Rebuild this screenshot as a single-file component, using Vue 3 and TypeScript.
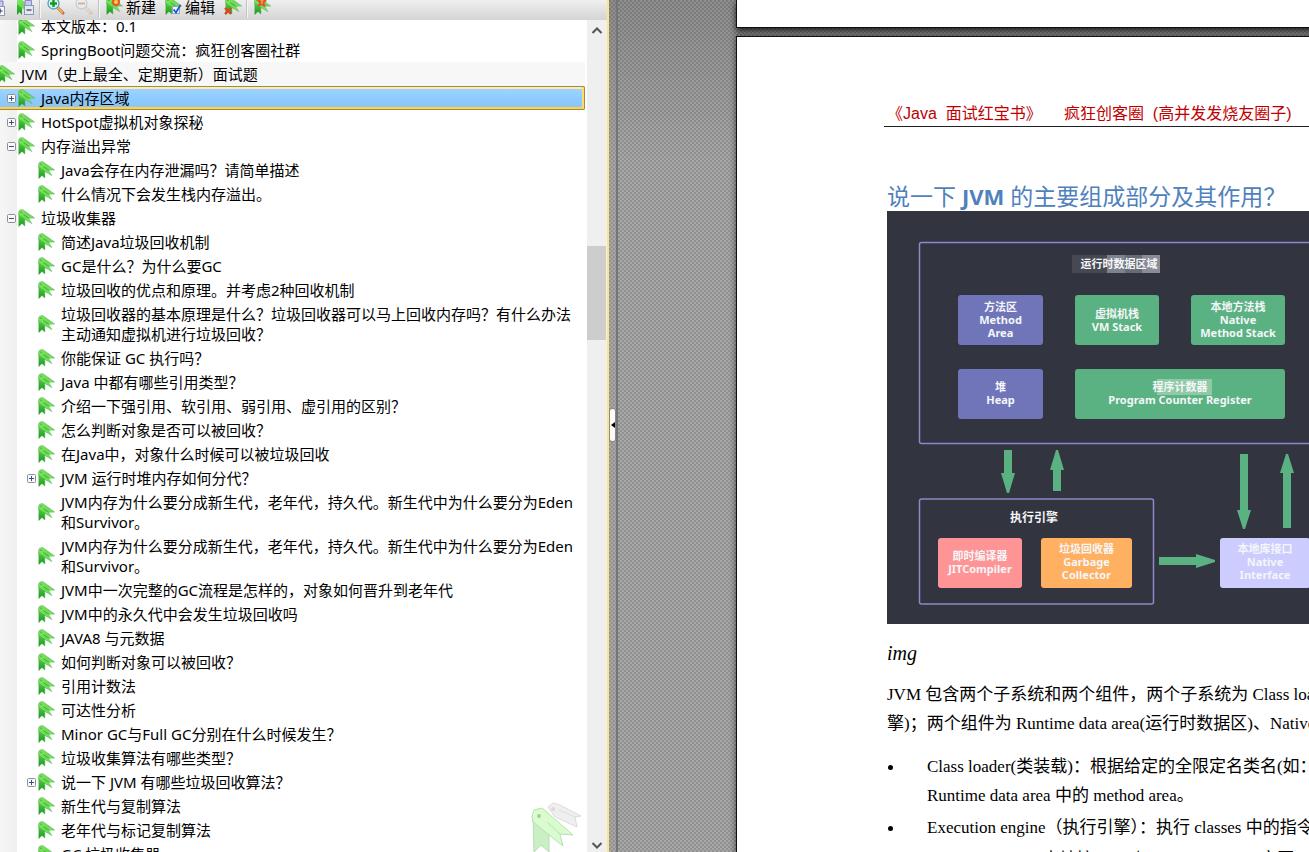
<script setup lang="ts">
import { ref } from 'vue'

interface Row {
  level: number
  text: string
  toggle?: 'plus' | 'minus'
  shaded?: boolean
}

const rows: Row[] = [
  { level: 1, text: '本文版本：0.1' },
  { level: 1, text: 'SpringBoot问题交流：疯狂创客圈社群' },
  { level: 0, text: 'JVM（史上最全、定期更新）面试题', shaded: true },
  { level: 1, text: 'Java内存区域', toggle: 'plus' },
  { level: 1, text: 'HotSpot虚拟机对象探秘', toggle: 'plus' },
  { level: 1, text: '内存溢出异常', toggle: 'minus' },
  { level: 2, text: 'Java会存在内存泄漏吗？请简单描述' },
  { level: 2, text: '什么情况下会发生栈内存溢出。' },
  { level: 1, text: '垃圾收集器', toggle: 'minus' },
  { level: 2, text: '简述Java垃圾回收机制' },
  { level: 2, text: 'GC是什么？为什么要GC' },
  { level: 2, text: '垃圾回收的优点和原理。并考虑2种回收机制' },
  { level: 2, text: '垃圾回收器的基本原理是什么？垃圾回收器可以马上回收内存吗？有什么办法\n主动通知虚拟机进行垃圾回收？' },
  { level: 2, text: '你能保证 GC 执行吗？' },
  { level: 2, text: 'Java 中都有哪些引用类型？' },
  { level: 2, text: '介绍一下强引用、软引用、弱引用、虚引用的区别？' },
  { level: 2, text: '怎么判断对象是否可以被回收？' },
  { level: 2, text: '在Java中，对象什么时候可以被垃圾回收' },
  { level: 2, text: 'JVM 运行时堆内存如何分代？', toggle: 'plus' },
  { level: 2, text: 'JVM内存为什么要分成新生代，老年代，持久代。新生代中为什么要分为Eden\n和Survivor。' },
  { level: 2, text: 'JVM内存为什么要分成新生代，老年代，持久代。新生代中为什么要分为Eden\n和Survivor。' },
  { level: 2, text: 'JVM中一次完整的GC流程是怎样的，对象如何晋升到老年代' },
  { level: 2, text: 'JVM中的永久代中会发生垃圾回收吗' },
  { level: 2, text: 'JAVA8 与元数据' },
  { level: 2, text: '如何判断对象可以被回收？' },
  { level: 2, text: '引用计数法' },
  { level: 2, text: '可达性分析' },
  { level: 2, text: 'Minor GC与Full GC分别在什么时候发生？' },
  { level: 2, text: '垃圾收集算法有哪些类型？' },
  { level: 2, text: '说一下 JVM 有哪些垃圾回收算法？', toggle: 'plus' },
  { level: 2, text: '新生代与复制算法' },
  { level: 2, text: '老年代与标记复制算法' },
  { level: 2, text: 'GC 垃圾收集器' },
]

const selected = ref(3)

interface Box {
  x: number
  y: number
  w: number
  fill: string
  lines: string[]
  first: number
}

const boxes: Box[] = [
  { x: 71, y: 84, w: 85, fill: '#7075b9', lines: ['方法区', 'Method', 'Area'], first: 100 },
  { x: 188, y: 84, w: 84, fill: '#5ab282', lines: ['虚拟机栈', 'VM Stack'], first: 107 },
  { x: 304, y: 84, w: 94, fill: '#5ab282', lines: ['本地方法栈', 'Native', 'Method Stack'], first: 100 },
  { x: 71, y: 158, w: 85, fill: '#7075b9', lines: ['堆', 'Heap'], first: 180 },
  { x: 188, y: 158, w: 210, fill: '#5ab282', lines: ['程序计数器', 'Program Counter Register'], first: 180 },
  { x: 51, y: 327, w: 84, fill: '#ff9496', lines: ['即时编译器', 'JITCompiler'], first: 349 },
  { x: 154, y: 327, w: 91, fill: '#ffb060', lines: ['垃圾回收器', 'Garbage', 'Collector'], first: 342 },
  { x: 333, y: 327, w: 90, fill: '#ccccff', lines: ['本地库接口', 'Native', 'Interface'], first: 342 },
]
</script>

<template>
  <svg class="defs" width="0" height="0" aria-hidden="true">
    <defs>
      <linearGradient id="leaf" x1="0" y1="0" x2="1" y2="1">
        <stop offset="0" stop-color="#86e566" />
        <stop offset=".5" stop-color="#6bda52" />
        <stop offset="1" stop-color="#9be88a" />
      </linearGradient>
      <linearGradient id="stem" x1="0" y1="0" x2="0" y2="1">
        <stop offset="0" stop-color="#5fcf4a" />
        <stop offset="1" stop-color="#129a18" />
      </linearGradient>
      <symbol id="bookmark" viewBox="0 0 17 18">
        <path d="M.8 5 L.8 17.6 L4 14.4 L6.800 17 L6.800 8 Z" fill="url(#stem)" stroke="#2f9f30" stroke-width=".4" />
        <path d="M.6 3 L1.600 1.200 L4.600 .5 L16.600 9 L10.600 9.200 L13.800 14.600 L6.800 10.400 L.8 6.200 Z" fill="url(#leaf)" stroke="#44ad40" stroke-width=".5" />
        <path d="M5.500 5.600 L10.600 9.200" stroke="#279d26" stroke-width=".7" />
        <circle cx="3" cy="3.300" r=".7" fill="#2f9a2f" />
      </symbol>
    </defs>
  </svg>

  <div class="app">
    <aside class="panel">
      <div class="toolbar">
        <button class="tool first" aria-label="展开">
          <svg width="18" height="18" viewBox="0 0 18 18">
            <path d="M3 1 H15 V9 H3 Z" fill="#c9c9ef" stroke="#7c7cb8" />
            <rect x="7.500" y="6.500" width="9" height="9" fill="#f3f6ff" stroke="#8e97b0" />
            <path d="M9.500 11 H14.500 M12 8.500 V13.500" stroke="#334" stroke-width="1.200" />
          </svg>
        </button>
        <button class="tool" aria-label="折叠">
          <svg width="19" height="18" viewBox="0 0 19 18">
            <path d="M1 0 V15 L3.500 12 L6 15 V0 Z" fill="url(#stem)" />
            <path d="M1 0 L6 0 L15 7 L10 8 L11 12 L1 4 Z" fill="url(#leaf)" />
            <path d="M9 .5 H15.500 V8 H9 Z" fill="#c9c9ef" stroke="#8a8ac4" />
            <rect x="8.500" y="5.500" width="9" height="9" fill="#e3e8f5" stroke="#8e97b0" />
            <path d="M10.500 10 H15.500" stroke="#334" stroke-width="1.200" />
          </svg>
        </button>
        <i class="sep"></i>
        <button class="tool" aria-label="放大">
          <svg width="19" height="18" viewBox="0 0 19 18">
            <path d="M10 7 L16 13" stroke="#c4502c" stroke-width="3" stroke-linecap="round" />
            <path d="M10 7 L16 13" stroke="#f2b35c" stroke-width="2" />
            <circle cx="6.500" cy="3.500" r="5.500" fill="#d7f1f8" stroke="#5f9fb8" stroke-width="1.300" />
            <path d="M3 3.500 H10 M6.500 0 V7" stroke="#159a1c" stroke-width="2.400" />
          </svg>
        </button>
        <button class="tool out" aria-label="缩小">
          <svg width="19" height="18" viewBox="0 0 19 18" opacity=".45">
            <path d="M10 7 L16 13" stroke="#cf8a70" stroke-width="3" stroke-linecap="round" />
            <path d="M10 7 L16 13" stroke="#f0cfae" stroke-width="2" />
            <circle cx="6.500" cy="3.500" r="5.500" fill="#e6eff3" stroke="#9ab0bb" stroke-width="1.300" />
            <path d="M3 3.500 H10" stroke="#d8604a" stroke-width="2" />
          </svg>
        </button>
        <i class="sep"></i>
        <button class="tool text">
          <svg width="17" height="18" viewBox="0 0 17 18">
            <use href="#bookmark" width="17" height="18" y="-3" />
            <circle cx="10" cy="2" r="4" fill="#e8552a" />
            <circle cx="10" cy="2" r="2" fill="#ffd83a" />
          </svg>
          新建
        </button>
        <button class="tool text edit">
          <svg width="17" height="18" viewBox="0 0 17 18">
            <use href="#bookmark" width="17" height="18" y="-3" />
            <rect x="7.500" y="6.500" width="7" height="7" fill="#eef4ff" stroke="#8ea6cc" />
            <path d="M8.500 9.500 L11 12.500 L15.500 5" fill="none" stroke="#2257c8" stroke-width="1.800" />
          </svg>
          编辑
        </button>
        <button class="tool del" aria-label="删除">
          <svg width="18" height="18" viewBox="0 0 18 18">
            <use href="#bookmark" width="17" height="18" x="1" y="-3" />
            <path d="M1 8 L7 14 M7 8 L1 14" stroke="#e04526" stroke-width="2.400" />
          </svg>
        </button>
        <i class="sep"></i>
        <button class="tool last" aria-label="全部删除">
          <svg width="18" height="18" viewBox="0 0 18 18">
            <use href="#bookmark" width="17" height="18" y="-3" />
            <path d="M4 0 L11 6 M12 0 L4 6" stroke="#e5512a" stroke-width="2.600" />
            <path d="M8 0 V4" stroke="#ff9a4a" stroke-width="1.500" />
          </svg>
        </button>
      </div>

      <div class="body">
        <div class="tree">
          <ul>
            <li
              v-for="(row, i) in rows"
              :key="i"
              :class="['row', 'l' + row.level, { shaded: row.shaded, selected: selected === i }]"
              @click="selected = i"
            >
              <button v-if="row.toggle" class="toggle" :aria-label="row.toggle === 'plus' ? '展开' : '折叠'">
                <svg width="9" height="9" viewBox="0 0 9 9">
                  <rect x=".5" y=".5" width="8" height="8" rx="1" fill="#f8f8f8" stroke="#8f8f8f" />
                  <path :d="row.toggle === 'plus' ? 'M2 4.500 H7 M4.500 2 V7' : 'M2 4.500 H7'" stroke="#34508f" />
                </svg>
              </button>
              <span v-else class="toggle"></span>
              <svg class="mark" width="17" height="18"><use href="#bookmark" width="17" height="18" /></svg>
              <a href="#" class="label" @click.prevent>{{ row.text }}</a>
            </li>
          </ul>
          <svg class="watermark" width="52" height="50" viewBox="0 0 52 50" aria-hidden="true">
            <path d="M17 5 L22 1 L29 3 L50 14 L44 15 L46 25 L24 15 Z" fill="#efefef" stroke="#dcdcdc" />
            <path d="M28 8 L44 15" stroke="#dedede" />
            <circle cx="22" cy="7" r="2" fill="#d8d8d8" />
            <path d="M2 14 L3 50 L10 43 L18 50 L18 26 Z" fill="#c9efc4" stroke="#b4deb2" />
            <path d="M1 14 L3 8 L11 6 L42 33 L29 32 L32 44 L2 20 Z" fill="#d9fbcf" stroke="#b6e2b0" />
            <path d="M16 20 L29 32" stroke="#b9e3b4" />
            <circle cx="8" cy="14" r="2" fill="#a4cfa0" />
          </svg>
        </div>
        <div class="scroll">
          <button aria-label="向上滚动">
            <svg width="12" height="9" viewBox="0 0 12 9"><path d="M1.500 7 L6 2.500 L10.500 7" fill="none" stroke="#555" stroke-width="2" /></svg>
          </button>
          <div class="track"><div class="thumb"></div></div>
          <button aria-label="向下滚动">
            <svg width="12" height="9" viewBox="0 0 12 9"><path d="M1.500 2 L6 6.500 L10.500 2" fill="none" stroke="#555" stroke-width="2" /></svg>
          </button>
        </div>
      </div>
    </aside>

    <div class="splitter">
      <button aria-label="收起书签栏">
        <svg width="4" height="6" viewBox="0 0 4 6"><path d="M4 0 V6 L0 3 Z" fill="#000" /></svg>
      </button>
    </div>

    <main class="desk">
      <div class="sheet prev"></div>
      <article class="sheet">
        <header>《Java&nbsp; 面试红宝书》&nbsp;&nbsp;&nbsp;&nbsp; 疯狂创客圈 &nbsp;(高并发发烧友圈子)</header>
        <h2>说一下 <b>JVM</b> 的主要组成部分及其作用？</h2>

        <svg class="diagram" width="640" height="413" viewBox="0 0 640 413" role="img" aria-label="JVM">
          <rect width="640" height="413" fill="#323440" />
          <g fill="none" stroke="#8d88c8" stroke-width="1.500">
            <rect x="32.500" y="31.500" width="560" height="201" rx="2" />
            <rect x="32.500" y="288" width="234" height="105" rx="2" />
          </g>
          <g>
            <rect x="185" y="44" width="35" height="18" fill="#464954" />
            <rect x="220" y="44" width="18" height="18" fill="#7e828c" />
            <rect x="238" y="44" width="17" height="18" fill="#676b76" />
            <rect x="255" y="44" width="18" height="18" fill="#898c96" />
          </g>
          <text x="232" y="57">运行时数据区域</text>
          <text class="big" x="147" y="311">执行引擎</text>
          <g v-for="b in boxes" :key="b.lines[0] + b.x">
            <rect :x="b.x" :y="b.y" :width="b.w" height="50" rx="3" :fill="b.fill" />
            <rect v-if="b.w === 210" x="270" y="168" width="55" height="16" fill="#8fc9a7" />
            <text v-for="(t, k) in b.lines" :key="t" :x="b.x + b.w / 2" :y="b.first + k * 13">{{ t }}</text>
          </g>
          <g fill="#5ab282">
            <path d="M117 239 H125 V262 H128 L122 282 H120 L114 262 H117 Z" />
            <path d="M166 280 H174 V259 H177 L171 239 H169 L163 259 H166 Z" />
            <path d="M353 243 H361 V299 H364 L358 318 H356 L350 299 H353 Z" />
            <path d="M396 317 H404 V262 H407 L401 243 H399 L393 262 H396 Z" />
            <path d="M272 346 H309 V343 L328 349 V351 L309 357 V354 H272 Z" />
          </g>
        </svg>

        <p class="caption">img</p>
        <p>JVM 包含两个子系统和两个组件，两个子系统为 Class loader(类装载)、Execution engine(执行引<br />擎)；两个组件为 Runtime data area(运行时数据区)、Native Interface(本地接口)。</p>
        <ul class="points">
          <li>Class loader(类装载)：根据给定的全限定名类名(如：java.lang.Object)来装载 class 文件到<br />Runtime data area 中的 method area。</li>
          <li>Execution engine（执行引擎）：执行 classes 中的指令。</li>
          <li>Native Interface(本地接口)：与 native libraries 交互，是其它编程语言交互的接口。</li>
        </ul>
      </article>
    </main>
  </div>
</template>

<style>
body {
  margin: 0;
  overflow: hidden;
}
</style>

<style scoped>
.defs {
  position: absolute;
}
.app {
  display: flex;
  height: 100vh;
  overflow: hidden;
  font: 15px/20px 'Noto Sans', 'Noto Sans CJK SC', sans-serif;
  color: #000;
}
button {
  border: 0;
  padding: 0;
  background: none;
  font: inherit;
  color: inherit;
}
.panel {
  flex: 0 0 607px;
  display: flex;
  flex-direction: column;
  border-right: 2px solid #ffe48f;
  background: #fff;
}
.toolbar {
  flex: 0 0 20px;
  display: flex;
  align-items: flex-start;
  overflow: hidden;
  background: linear-gradient(#efefef, #d4d4d4);
}
.tool {
  flex: none;
  display: flex;
}
.tool svg {
  display: block;
}
.tool.first {
  margin: 0 10px 0 -12px;
}
.tool.out {
  margin-left: 9px;
}
.tool.text {
  gap: 3px;
  line-height: 14px;
  white-space: nowrap;
}
.tool.edit,
.tool.del {
  margin-left: 9px;
}
.sep {
  flex: 0 0 1px;
  height: 18px;
  margin: 0 6px 0 4px;
  background: #c2c2c2;
  border-right: 1px solid #f6f6f6;
}
.body {
  flex: 1;
  min-height: 0;
  display: flex;
}
.tree {
  flex: 1;
  min-width: 0;
  position: relative;
  overflow: hidden;
  background: linear-gradient(90deg, #f6f6f6, #efefef 17px, #fff 17px);
}
.tree ul {
  list-style: none;
  margin: -6px 2px 0 -13px;
  padding: 0;
}
.row {
  display: flex;
  align-items: center;
  box-sizing: border-box;
  min-height: 24px;
  padding: 2px 0;
}
.l1 {
  padding-left: 20px;
}
.l2 {
  padding-left: 40px;
}
.shaded {
  background: #f7f7f7;
}
.selected {
  background: linear-gradient(#a3d5ff, #8ccaff 60%, #8fc4ee);
  border-radius: 2px;
  box-shadow: inset 0 0 0 1px #a38a45, inset -3px 0 0 #ffdb75, inset 0 3px 0 #ffebaf, inset 0 -3px 0 #ffd04a;
}
.toggle {
  flex: 0 0 9px;
  height: 9px;
  margin-right: 2px;
}
.toggle svg {
  display: block;
}
.mark {
  flex: none;
  margin-right: 6px;
}
.label {
  color: inherit;
  text-decoration: none;
  white-space: pre;
}
.watermark {
  position: absolute;
  right: 4px;
  bottom: 0;
}
.scroll {
  flex: 0 0 20px;
  display: flex;
  flex-direction: column;
  background: #efefef;
}
.scroll button {
  flex: 0 0 20px;
  display: flex;
  align-items: center;
  justify-content: center;
}
.scroll button:last-child {
  flex-basis: 14px;
}
.track {
  flex: 1;
}
.thumb {
  height: 94px;
  margin: 206px 1px 0 0;
  background: #cdcdcd;
}
.splitter,
.desk {
  background:
    radial-gradient(circle at 1px 1px, rgba(0, 0, 0, 0.14) 0 1px, transparent 1px) 0 0 / 4px 4px,
    radial-gradient(circle at 1px 1px, rgba(0, 0, 0, 0.14) 0 1px, transparent 1px) 2px 2px / 4px 4px,
    linear-gradient(#8e8e8e, #a8a8a8 160px);
}
.splitter {
  flex: 0 0 7px;
  display: flex;
  align-items: center;
  border-right: 2px solid #757575;
}
.splitter button {
  display: flex;
  align-items: center;
  justify-content: center;
  width: 5px;
  height: 32px;
  margin: 0 0 2px 1px;
  border-radius: 2px;
  background: #fafafa;
  box-shadow: 0 0 0 1px #8a8a8a;
}
.desk {
  flex: 1;
  min-width: 0;
  overflow: hidden;
  padding-left: 118px;
}
.sheet {
  box-sizing: border-box;
  width: 900px;
  height: 1200px;
  padding: 66px 147px 0;
  border: 1px solid #111;
  background: #fff;
  box-shadow: 0 0 6px rgba(0, 0, 0, 0.6);
}
.sheet.prev {
  height: 28px;
  margin-bottom: 8px;
  padding: 0;
  border-top: 0;
  box-shadow: 0 3px 6px rgba(0, 0, 0, 0.8);
}
header {
  height: 23px;
  padding-left: 3px;
  border-bottom: 1px solid #222;
  font: 16px/22px 'Liberation Sans', 'Noto Sans CJK SC', sans-serif;
  color: #c00000;
  white-space: nowrap;
}
h2 {
  margin: 54px 0 0 3px;
  font: 400 23px/30px 'Open Sans', 'Noto Sans CJK SC', sans-serif;
  color: #4f81bd;
  white-space: nowrap;
}
h2 b {
  font-size: 22px;
  font-weight: 700;
  line-height: 20px;
}
.diagram {
  display: block;
  margin-left: 3px;
}
.diagram text {
  font: 700 11px 'Noto Sans', 'Noto Sans CJK SC', sans-serif;
  fill: #f4f6f8;
  text-anchor: middle;
}
.diagram .big {
  font-size: 12px;
}
p,
.points {
  margin: 12px 0 0 3px;
  padding: 0;
  font: 17px/29px 'Liberation Serif', 'Noto Sans CJK SC', serif;
  white-space: nowrap;
}
p.caption {
  margin-top: 15px;
  font-size: 20px;
  font-style: italic;
}
.points {
  margin-top: 14px;
  list-style: none;
}
.points li {
  position: relative;
  margin-bottom: 3px;
  padding-left: 40px;
}
.points li::before {
  content: '';
  position: absolute;
  left: 1px;
  top: 13px;
  width: 5px;
  height: 5px;
  border-radius: 50%;
  background: #000;
}
</style>
